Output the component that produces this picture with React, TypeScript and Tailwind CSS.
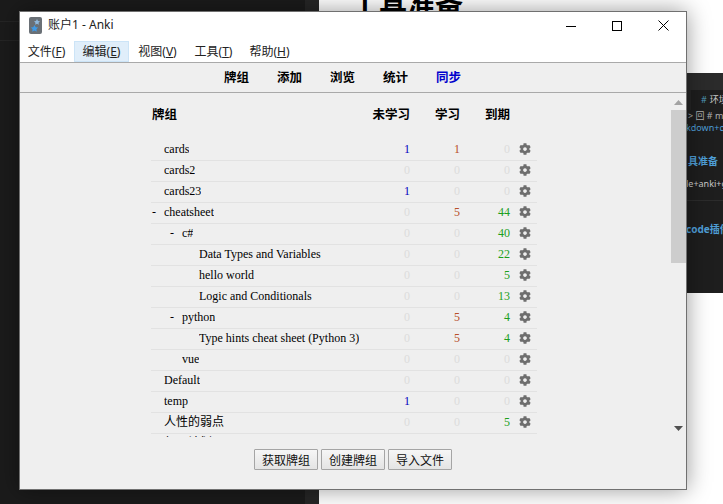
import { FaCog } from "react-icons/fa";

type Deck = { name: string; depth: 0 | 1 | 2; open?: boolean; n: number; l: number; r: number };

const decks: Deck[] = [
  { name: "cards", depth: 0, n: 1, l: 1, r: 0 },
  { name: "cards2", depth: 0, n: 0, l: 0, r: 0 },
  { name: "cards23", depth: 0, n: 1, l: 0, r: 0 },
  { name: "cheatsheet", depth: 0, open: true, n: 0, l: 5, r: 44 },
  { name: "c#", depth: 1, open: true, n: 0, l: 0, r: 40 },
  { name: "Data Types and Variables", depth: 2, n: 0, l: 0, r: 22 },
  { name: "hello world", depth: 2, n: 0, l: 0, r: 5 },
  { name: "Logic and Conditionals", depth: 2, n: 0, l: 0, r: 13 },
  { name: "python", depth: 1, open: true, n: 0, l: 5, r: 4 },
  { name: "Type hints cheat sheet (Python 3)", depth: 2, n: 0, l: 5, r: 4 },
  { name: "vue", depth: 1, n: 0, l: 0, r: 0 },
  { name: "Default", depth: 0, n: 0, l: 0, r: 0 },
  { name: "temp", depth: 0, n: 1, l: 0, r: 0 },
  { name: "人性的弱点", depth: 0, n: 0, l: 0, r: 5 },
  { name: "每日计划", depth: 0, n: 0, l: 0, r: 4 },
];

const depthPad = { 0: "pl-[1px]", 1: "pl-[19px]", 2: "pl-[36px]" };

const menus = [
  { label: "文件", key: "F" },
  { label: "编辑", key: "E", hover: true },
  { label: "视图", key: "V" },
  { label: "工具", key: "T" },
  { label: "帮助", key: "H" },
];

const tabs = [
  { label: "牌组", color: "text-black" },
  { label: "添加", color: "text-black" },
  { label: "浏览", color: "text-black" },
  { label: "统计", color: "text-black" },
  { label: "同步", color: "text-[#0000cc]" },
];

function Count({ value, color, width }: { value: number; color: string; width: string }) {
  return <span className={`${width} shrink-0 text-right ${value === 0 ? "text-[#dcdcdc]" : color}`}>{value}</span>;
}

function DeckRow({ deck }: { deck: Deck }) {
  return (
    <div className="flex h-[21px] items-center border-b border-[#e2e2e2] pb-[2px] font-['Liberation_Serif','Noto_Sans_CJK_SC',serif] text-[12px] text-black">
      <div className={`flex min-w-0 flex-1 items-center ${depthPad[deck.depth]}`}>
        <span className="w-[12px] shrink-0">{deck.open ? "-" : ""}</span>
        <span className="truncate">{deck.name}</span>
      </div>
      <Count value={deck.n} color="text-[#0000c0]" width="w-[40px]" />
      <Count value={deck.l} color="text-[#b8502a]" width="w-[50px]" />
      <Count value={deck.r} color="text-[#1ca01c]" width="w-[50px]" />
      <span className="ml-[9px] mr-[6px] flex w-[12px] shrink-0 justify-center text-[#6e6e6e]">
        <FaCog size={14} />
      </span>
    </div>
  );
}

function AnkiWindow() {
  return (
    <div className="absolute left-[19px] top-[11px] flex h-[479px] w-[668px] flex-col border border-[#707070] bg-[#efefef] shadow-[0_0_22px_rgba(0,0,0,0.4)]">
      {/* title bar */}
      <div className="flex h-[29px] shrink-0 items-center bg-white pb-[3px] pl-[9px]">
        <svg width="13" height="17" viewBox="0 0 13 17" className="shrink-0">
          <rect width="13" height="17" rx="2" fill="#6a7076" />
          <path d="M8 2l1 2 2 .3-1.500 1.400.4 2-1.900-1-1.900 1 .4-2L5 4.300 7 4z" fill="#8fb8dc" />
          <path d="M5.500 8l1.200 2.200 2.500.4-1.800 1.700.4 2.400-2.300-1.200-2.300 1.200.4-2.400-1.800-1.700 2.500-.4z" fill="#3f9be8" />
        </svg>
        <span className="ml-[6px] font-['Noto_Sans','Noto_Sans_CJK_SC',sans-serif] text-[12px] text-[#222]">账户1 - Anki</span>
        <div className="ml-auto flex items-center pt-[1px] text-black">
          <span className="flex w-[46px] justify-center">
            <svg width="10" height="10" viewBox="0 0 10 10"><path d="M0 5.500h10" stroke="currentColor" fill="none" /></svg>
          </span>
          <span className="flex w-[46px] justify-center">
            <svg width="10" height="10" viewBox="0 0 10 10"><rect x=".5" y=".5" width="9" height="9" stroke="currentColor" fill="none" /></svg>
          </span>
          <span className="flex w-[46px] justify-center">
            <svg width="11" height="11" viewBox="0 0 11 11"><path d="M.5.500l10 10M10.500.500l-10 10" stroke="currentColor" fill="none" /></svg>
          </span>
        </div>
      </div>

      {/* menu bar */}
      <div className="flex h-[22px] shrink-0 items-stretch gap-[1px] border-b border-[#a9a9a9] bg-white font-['Noto_Sans','Noto_Sans_CJK_SC',sans-serif] text-[12px] text-[#222]">
        {menus.map((m) => (
          <span
            key={m.key}
            className={`flex items-center justify-center border ${m.hover ? "border-[#cce4f7] bg-[#e0eefa]" : "border-transparent"} ${m.key === "F" ? "w-[53px]" : "w-[55px]"}`}
          >
            {m.label}(<span className="underline">{m.key}</span>)
          </span>
        ))}
      </div>

      {/* top toolbar */}
      <div className="flex h-[30px] shrink-0 items-center justify-center gap-[28px] border-b border-[#a9a9a9] pr-[21px] font-['Noto_Sans_CJK_SC',sans-serif] text-[12.500px] font-bold">
        {tabs.map((t) => (
          <span key={t.label} className={t.color}>
            {t.label}
          </span>
        ))}
      </div>

      {/* deck list */}
      <div className="flex min-h-0 flex-1">
        <div className="min-w-0 flex-1 overflow-hidden pt-[11px]">
          <div className="ml-[131px] w-[386px]">
            <div className="flex h-[20px] items-center font-['Noto_Sans_CJK_SC',sans-serif] text-[12.500px] font-bold text-black">
              <span className="flex-1 pl-[1px]">牌组</span>
              <span className="w-[40px] text-right">未学习</span>
              <span className="w-[50px] text-right">学习</span>
              <span className="w-[50px] text-right">到期</span>
              <span className="w-[27px]" />
            </div>
            <div className="mt-[16px]">
              {decks.map((d) => (
                <DeckRow key={d.name} deck={d} />
              ))}
            </div>
          </div>
        </div>
        {/* scrollbar */}
        <div className="flex w-[15px] shrink-0 flex-col items-center">
          <svg width="9" height="5" viewBox="0 0 9 5" className="mt-[7px] shrink-0"><path d="M4.500 0l4.500 5H0z" fill="#a3a3a3" /></svg>
          <div className="mt-[5px] h-[153px] w-full bg-[#cdcdcd]" />
          <svg width="9" height="5" viewBox="0 0 9 5" className="mb-[6px] mt-auto shrink-0"><path d="M0 0h9L4.500 5z" fill="#505050" /></svg>
        </div>
      </div>

      {/* bottom buttons */}
      <div className="flex h-[52px] shrink-0 items-start justify-center gap-[3px] pt-[12px]">
        {["获取牌组", "创建牌组", "导入文件"].map((b) => (
          <button
            key={b}
            className="h-[21px] w-[64px] rounded-[1px] border border-[#a5a5a5] bg-gradient-to-b from-[#f6f6f6] to-[#e4e4e4] font-['Noto_Sans_CJK_SC',sans-serif] text-[12px] leading-none text-[#111]"
          >
            {b}
          </button>
        ))}
      </div>
    </div>
  );
}

function EditorBehind() {
  return (
    <div className="absolute left-[686px] top-[73px] flex h-[220px] w-[37px] flex-col overflow-hidden whitespace-nowrap bg-[#1e1e1e] font-['Noto_Sans','Noto_Sans_CJK_SC',sans-serif] text-[9px]">
      <div className="h-[17px] shrink-0 bg-[#2b2b2b]" />
      <div className="flex h-[20px] shrink-0 items-center bg-[#252525] pl-[5px]">
        <span className="flex h-full flex-1 items-center gap-[3px] bg-[#1e1e1e] pl-[10px] text-[#c8c8c8]">
          <span className="text-[#519aba]">#</span>
          <span>环境</span>
        </span>
      </div>
      <div className="h-[12px] shrink-0 pl-[2px] leading-[12px] text-[#b0b0b0]">&gt; 回 # ma</div>
      <div className="h-[12px] shrink-0 leading-[12px] text-[#4f9fd8]">kdown+do</div>
      <div className="mt-[20px] h-[14px] shrink-0 pl-[2px] text-[10px] leading-[14px] font-bold text-[#4f9fd8]">具准备</div>
      <div className="mt-[10px] h-[12px] shrink-0 leading-[12px] text-[#c8c8c8]">le+anki+g</div>
      <div className="mt-[10px] h-[1px] shrink-0 bg-[#2c2c2c]" />
      <div className="mt-[21px] h-[14px] shrink-0 text-[10px] leading-[14px] font-bold text-[#4f9fd8]">code插件</div>
    </div>
  );
}

export default function App() {
  return (
    <div className="relative h-[504px] w-[723px] overflow-hidden bg-white">
      {/* desktop behind the window */}
      <div className="absolute inset-y-0 left-0 flex w-[319px]">
        <div className="flex w-[305px] flex-col bg-[#1b1b1b]">
          <div className="mt-[21px] h-[1px] bg-[#252525]" />
          <div className="mt-[18px] h-[1px] bg-[#252525]" />
        </div>
        <div className="w-[14px] bg-[#262626]" />
      </div>
      <div className="absolute left-[351px] top-[-15px] whitespace-nowrap font-['Noto_Sans_CJK_SC',sans-serif] text-[28px] font-bold leading-[36px] text-black">
        工具准备
      </div>
      <EditorBehind />
      <AnkiWindow />
    </div>
  );
}
